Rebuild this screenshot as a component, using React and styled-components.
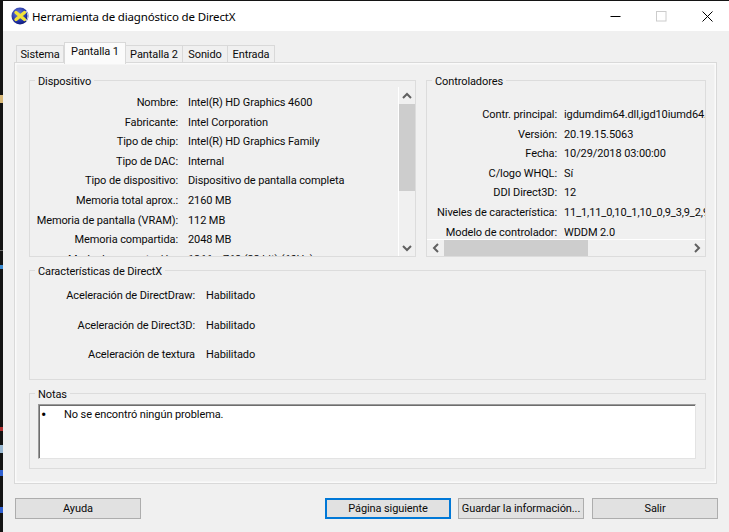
import React from "react";
import styled, { createGlobalStyle } from "styled-components";

const Global = createGlobalStyle`
  html, body { margin: 0; padding: 0; background: #111; }
  * { box-sizing: border-box; }
`;

const Root = styled.div`
  display: flex;
  width: 729px;
  height: 532px;
  overflow: hidden;
  background: #141414;
  font-family: "Roboto", "Noto Sans", sans-serif;
  font-size: 11px;
  letter-spacing: -0.1px;
  color: #0a0a0a;
`;

const DesktopStrip = styled.div`
  width: 3px;
  flex: none;
  background:
    linear-gradient(#141414 0 95px, #d8b878 95px 103px, #141414 103px 250px, #6d6d6d 250px 251px, #141414 251px 265px, #3a8ad0 265px 269px, #141414 269px 427px, #b03030 427px 431px, #141414 431px 445px, #9ab8d0 445px 453px, #141414 453px 470px, #3060d0 470px 476px, #141414 476px 507px, #3060d0 507px 513px, #141414 513px);
`;

const Window = styled.div`
  flex: 1;
  display: flex;
  flex-direction: column;
  margin-top: 1px;
  background: #f0f0f0;
`;

const TitleBar = styled.div`
  height: 30px;
  flex: none;
  display: flex;
  align-items: center;
  background: #fff;
  padding-left: 8px;
`;

const Title = styled.div`
  margin-left: 3px;
  font-family: "Noto Sans", sans-serif;
  font-size: 11.5px;
  letter-spacing: -0.16px;
  color: #000;
  flex: 1;
`;

const WindowButton = styled.div`
  width: 46px;
  height: 30px;
  display: flex;
  align-items: center;
  justify-content: center;
`;

const Body = styled.div`
  flex: 1;
  padding: 11px 13px 0 11px;
  display: flex;
  flex-direction: column;
`;

const TabRow = styled.div`
  display: flex;
  align-items: flex-end;
  height: 21px;
  padding-left: 2px;
  position: relative;
  z-index: 1;
`;

const Tab = styled.div`
  height: ${(p) => (p.$active ? 22 : 18)}px;
  width: ${(p) => p.$w}px;
  margin-bottom: ${(p) => (p.$active ? -1 : 0)}px;
  display: flex;
  align-items: center;
  justify-content: center;
  padding-bottom: ${(p) => (p.$active ? 5 : 0)}px;
  background: ${(p) => (p.$active ? "#fbfbfb" : "#f0f0f0")};
  border: 1px solid #d9d9d9;
  border-bottom: ${(p) => (p.$active ? "none" : "1px solid #d9d9d9")};
  border-left: ${(p) => (p.$first || p.$active ? "1px solid #d9d9d9" : "none")};
`;

const Panel = styled.div`
  height: 422px;
  margin-top: -1px;
  flex: none;
  padding: 17px 10px 0 14px;
  border: 1px solid #d9d9d9;
  box-shadow: inset 0 0 0 1.5px #fafafa;
  display: flex;
  flex-direction: column;
  gap: 13px;
`;

const TopRow = styled.div`
  display: grid;
  grid-template-columns: 387px 280px;
  grid-template-rows: 177px;
  column-gap: 10px;
  height: 177px;
`;

const Group = styled.div`
  position: relative;
  border: 1px solid #dcdcdc;
  height: ${(p) => (p.$h ? `${p.$h}px` : "auto")};
  flex: none;
  min-height: 0;
`;

const GroupLabel = styled.div`
  position: absolute;
  top: -7px;
  left: 5px;
  padding: 0 3px;
  line-height: 15px;
  background: #f0f0f0;
  z-index: 1;
`;

const DeviceGroup = styled(Group)`
  display: flex;
`;

const ControllerGroup = styled(Group)`
  display: flex;
  flex-direction: column;
`;

const InfoList = styled.div`
  flex: 1;
  min-width: 0;
  min-height: 0;
  overflow: hidden;
  padding-top: ${(p) => p.$top}px;
  display: grid;
  grid-template-columns: ${(p) => p.$label}px 1fr;
  grid-auto-rows: ${(p) => p.$row}px;
  column-gap: ${(p) => p.$gap}px;
  align-items: center;
  white-space: nowrap;
`;

const Label = styled.div`
  text-align: right;
`;

const Value = styled.div`
  overflow: hidden;
`;

const VScroll = styled.div`
  width: 17px;
  margin-top: 6px;
  border-left: 1px solid #fff;
  flex: none;
  display: flex;
  flex-direction: column;
`;

const VArrow = styled.div`
  height: 17px;
  flex: none;
  display: flex;
  align-items: center;
  justify-content: center;
`;

const VThumb = styled.div`
  height: 87px;
  background: #cdcdcd;
  flex: none;
`;

const Spacer = styled.div`
  flex: 1;
`;

const HScroll = styled.div`
  height: 17px;
  flex: none;
  border-top: 1px solid #fff;
  display: flex;
`;

const HArrow = styled.div`
  width: 17px;
  flex: none;
  display: flex;
  align-items: center;
  justify-content: center;
`;

const HThumb = styled.div`
  width: 144px;
  background: #cdcdcd;
  flex: none;
`;

const NotesBody = styled.div`
  padding: 10px 9px 9px 8px;
`;

const NotesBox = styled.div`
  height: 55px;
  background: #fff;
  border-top: 1px solid #9a9a9a;
  border-left: 1px solid #9a9a9a;
  border-right: 1px solid #e3e3e3;
  border-bottom: 1px solid #e3e3e3;
  box-shadow: inset 1px 1px 0 #6d6d6d;
  padding: 2px 0 0 2px;
  display: flex;
  line-height: 16px;
`;

const Bullet = styled.span`
  width: 23px;
  flex: none;
  font-size: 16px;
  color: #000;
`;

const ButtonRow = styled.div`
  display: flex;
  gap: 7px;
  margin: 14px -1px 0 1px;
`;

const Button = styled.div`
  width: 126px;
  height: 21px;
  flex: none;
  display: flex;
  align-items: center;
  justify-content: center;
  background: #e1e1e1;
  border: ${(p) => (p.$default ? "2px solid #0078d7" : "1px solid #adadad")};
  margin-right: ${(p) => (p.$push ? "auto" : 0)};
  margin-left: ${(p) => (p.$nudge ? "1px" : 0)};
  white-space: nowrap;
`;

const DxLogo = () => (
  <svg width="18" height="18" viewBox="0 0 18 18">
    <defs>
      <radialGradient id="dxg" cx="0.4" cy="0.35" r="0.75">
        <stop offset="0" stopColor="#6d7fe0" />
        <stop offset="0.7" stopColor="#1a2a9a" />
        <stop offset="1" stopColor="#0c1560" />
      </radialGradient>
    </defs>
    <circle cx="9" cy="9" r="8.5" fill="url(#dxg)" />
    <path d="M5 5.5 L13.5 12.5 M13.5 5.5 L5 12.5" stroke="#f2e23a" strokeWidth="3.4" strokeLinecap="round" />
    <path d="M15 4 A8 8 0 0 1 15 14" fill="none" stroke="#dfe3f5" strokeWidth="1" />
  </svg>
);

const Chevron = ({ dir }) => {
  const pts = {
    up: "1,7 5,3 9,7",
    down: "1,3 5,7 9,3",
    left: "7,1 3,5 7,9",
    right: "3,1 7,5 3,9",
  }[dir];
  return (
    <svg width="10" height="10" viewBox="0 0 10 10">
      <polyline points={pts} fill="none" stroke="#606060" strokeWidth="2" />
    </svg>
  );
};

const device = [
  ["Nombre:", "Intel(R) HD Graphics 4600"],
  ["Fabricante:", "Intel Corporation"],
  ["Tipo de chip:", "Intel(R) HD Graphics Family"],
  ["Tipo de DAC:", "Internal"],
  ["Tipo de dispositivo:", "Dispositivo de pantalla completa"],
  ["Memoria total aprox.:", "2160 MB"],
  ["Memoria de pantalla (VRAM):", "112 MB"],
  ["Memoria compartida:", "2048 MB"],
  ["Modo de presentación:", "1366 x 768 (32 bit) (60Hz)"],
];

const drivers = [
  ["Contr. principal:", "igdumdim64.dll,igd10iumd64.dll,igd10iumd64.dll"],
  ["Versión:", "20.19.15.5063"],
  ["Fecha:", "10/29/2018 03:00:00"],
  ["C/logo WHQL:", "Sí"],
  ["DDI Direct3D:", "12"],
  ["Niveles de característica:", "11_1,11_0,10_1,10_0,9_3,9_2,9_1"],
  ["Modelo de controlador:", "WDDM 2.0"],
];

const features = [
  ["Aceleración de DirectDraw:", "Habilitado"],
  ["Aceleración de Direct3D:", "Habilitado"],
  ["Aceleración de textura", "Habilitado"],
];

const Rows = ({ rows }) =>
  rows.map(([k, v]) => (
    <React.Fragment key={k}>
      <Label>{k}</Label>
      <Value>{v}</Value>
    </React.Fragment>
  ));

export default function App() {
  return (
    <Root>
      <Global />
      <DesktopStrip />
      <Window>
        <TitleBar>
          <DxLogo />
          <Title>Herramienta de diagnóstico de DirectX</Title>
          <WindowButton>
            <svg width="11" height="11" viewBox="0 0 11 11">
              <path d="M0.5 5.5H10.5" stroke="#000" strokeWidth="1" />
            </svg>
          </WindowButton>
          <WindowButton>
            <svg width="11" height="11" viewBox="0 0 11 11">
              <rect x="0.5" y="0.5" width="9.5" height="9.5" fill="none" stroke="#ccc" strokeWidth="1" />
            </svg>
          </WindowButton>
          <WindowButton>
            <svg width="11" height="11" viewBox="0 0 11 11">
              <path d="M0.5 0.5L10.5 10.5M10.5 0.5L0.5 10.5" stroke="#000" strokeWidth="1" />
            </svg>
          </WindowButton>
        </TitleBar>
        <Body>
          <TabRow>
            <Tab $first $w={48}>Sistema</Tab>
            <Tab $active $w={62}>Pantalla 1</Tab>
            <Tab $w={57}>Pantalla 2</Tab>
            <Tab $w={45}>Sonido</Tab>
            <Tab $w={47}>Entrada</Tab>
          </TabRow>
          <Panel>
            <TopRow>
              <DeviceGroup>
                <GroupLabel>Dispositivo</GroupLabel>
                <InfoList $top={11.7} $label={148} $gap={10} $row={19.6}>
                  <Rows rows={device} />
                </InfoList>
                <VScroll>
                  <VArrow><Chevron dir="up" /></VArrow>
                  <VThumb />
                  <Spacer />
                  <VArrow><Chevron dir="down" /></VArrow>
                </VScroll>
              </DeviceGroup>
              <ControllerGroup>
                <GroupLabel>Controladores</GroupLabel>
                <InfoList $top={23.7} $label={130} $gap={7} $row={19.6}>
                  <Rows rows={drivers} />
                </InfoList>
                <HScroll>
                  <HArrow><Chevron dir="left" /></HArrow>
                  <HThumb />
                  <Spacer />
                  <HArrow><Chevron dir="right" /></HArrow>
                </HScroll>
              </ControllerGroup>
            </TopRow>
            <Group $h={110}>
              <GroupLabel>Características de DirectX</GroupLabel>
              <InfoList $top={10} $label={165} $gap={11} $row={29.5}>
                <Rows rows={features} />
              </InfoList>
            </Group>
            <Group $h={76}>
              <GroupLabel>Notas</GroupLabel>
              <NotesBody>
                <NotesBox>
                  <Bullet>•</Bullet>
                  <span>No se encontró ningún problema.</span>
                </NotesBox>
              </NotesBody>
            </Group>
          </Panel>
          <ButtonRow>
            <Button $push>Ayuda</Button>
            <Button $default>Página siguiente</Button>
            <Button>Guardar la información...</Button>
            <Button $nudge>Salir</Button>
          </ButtonRow>
        </Body>
      </Window>
    </Root>
  );
}
